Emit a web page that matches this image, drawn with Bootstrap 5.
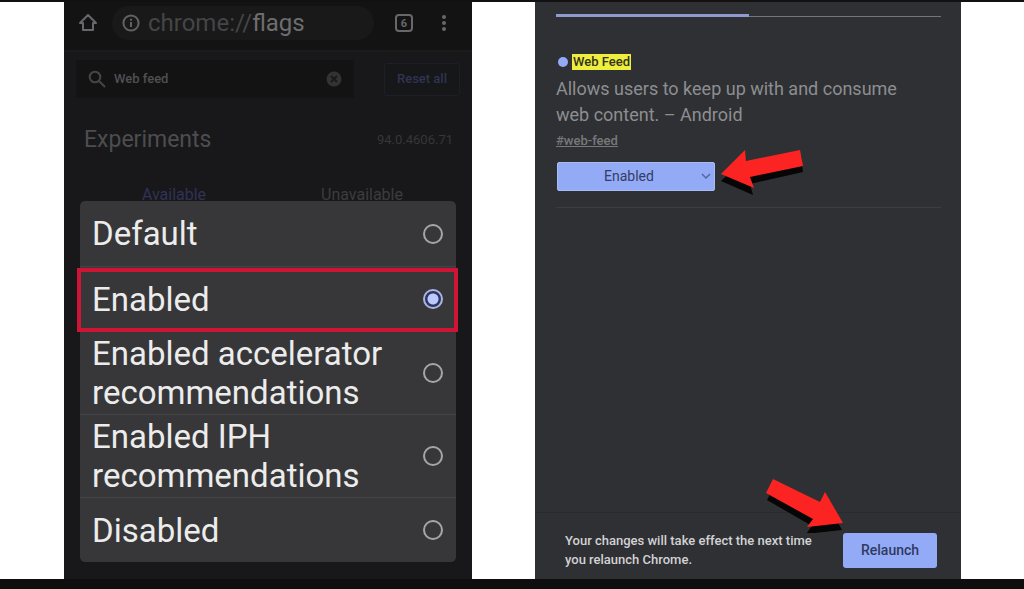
<!DOCTYPE html>
<html lang="en">
<head>
<meta charset="utf-8">
<meta name="viewport" content="width=device-width, initial-scale=1">
<title>Chrome flags: Web Feed</title>
<link rel="stylesheet" href="https://cdn.jsdelivr.net/npm/bootstrap@5.3.0/dist/css/bootstrap.min.css">
<style>
  body { font-family: Roboto, "Liberation Sans", sans-serif; background: #fff; border-top: 2px solid #111; border-bottom: 10px solid #0e0e0e; }
  .stage { display: grid; grid-template-columns: 64fr 408fr 63fr 426fr 63fr; }
  .phone-a { grid-column: 2; background: #18181a; color: #4d4d4f; }
  .phone-b { grid-column: 4; background: #2f3033; color: #8d8e91; }
  .toolbar { height: 50px; background: #131313; border-bottom: 2px solid #1c1c1c; padding: 0 20px 6px 14px; color: #68686a; }
  .omnibox { background: #191919; border: 0; border-radius: 18px; height: 34px; font-size: 24px; line-height: 34px; color: #454547; padding: 0 10px; margin: 0 20px 0 14px; }
  .omnibox b { font-weight: 400; color: #6d6d70; }
  .plain-btn { background: none; border: 0; padding: 0; color: inherit; line-height: 0; }
  .menu-btn { margin-left: 22px; }
  .search-row { padding: 8px 12px 0; gap: 30px; }
  .search-box { background: #131314; height: 38px; padding: 0 12px 0 12px; gap: 8px; color: #464648; }
  .search-box input { background: none; border: 0; outline: 0; min-width: 0; padding: 0; font-size: 13px; font-weight: 500; color: #505052; }
  .reset-btn { width: 76px; height: 33px; padding: 0; border: 1px solid #1d1e26; border-radius: 3px; background: #161719; color: #2f3452; font-size: 13px; font-weight: 500; }
  .heading-row { padding: 26px 19px 0 20px; }
  .heading-row h1 { font-size: 23px; line-height: 32px; font-weight: 400; margin: 0; }
  .version { font-size: 13px; color: #363638; }
  .tab-row { padding-top: 29px; font-size: 16px; line-height: 20px; font-weight: 400; }
  .tab-row a { flex: 1; text-align: center; text-decoration: none; color: #3c3c3e; }
  .tab-row a.current { color: #2f3355; }
  .picker { position: absolute; left: 16px; right: 16px; bottom: 17px; background: #373739; border-radius: 5px; color: #ececec; }
  .option { min-height: 65px; padding: 0 13px 0 12px; font-size: 33px; line-height: 39px; cursor: pointer; }
  .option.tall { min-height: 83px; }
  .option + .option { border-top: 1px solid #444447; }
  .option span { max-width: 310px; }
  .option input { appearance: none; flex: none; width: 20px; height: 20px; margin: 0; border: 2px solid #a6a6a8; border-radius: 50%; }
  .option input:checked { border-color: #a9b5de; background: radial-gradient(circle, #bcc8fa 5px, #2b3463 6px); }
  .option.marked { position: relative; }
  .option.marked::after { content: ""; position: absolute; inset: 1px -2px -1px -3px; border: 4px solid #d01436; }
  .flag { padding: 12px 20px 0 21px; }
  .tabline { height: 3px; border-bottom: 1px solid #74757b; }
  .tabline div { width: 50%; height: 3px; background: #8d9bd0; }
  .flag-name { margin-top: 37px; gap: 4px; font-size: 13px; line-height: 16px; font-weight: 500; }
  .flag-name i { width: 10px; height: 10px; border-radius: 50%; background: #94aaf6; margin-left: 2px; }
  .flag-name mark { background: #eeee3f; color: #33331b; padding: 0 1px; }
  .flag-text { font-size: 18px; line-height: 26px; margin: 6px 0 4px; max-width: 350px; }
  .flag-link { font-size: 13px; line-height: 18px; font-weight: 500; color: #77787b; display: block; }
  .flag-link:hover { color: #aaa; }
  .state { position: relative; width: 158px; margin: 12px 0 0 1px; }
  .state select { appearance: none; display: block; width: 100%; height: 29px; border: 1px solid #a9bbf5; border-radius: 2px; background: #93abf7; color: #343d63; font-size: 14px; padding: 0 14px 0 0; text-align: center; text-align-last: center; }
  .state .chev { position: absolute; right: 4px; top: 10px; pointer-events: none; }
  .rule { height: 1px; background: #3c3d40; margin-top: 16px; }
  .restart { border-top: 1px solid #292a2c; padding: 18px 24px 10px 30px; color: #d2d2d4; font-size: 13px; line-height: 19px; font-weight: 500; }
  .restart p { max-width: 260px; }
  .relaunch { width: 94px; height: 35px; border: 0; border-radius: 3px; background: #93abf7; color: #303a60; font-size: 14px; font-weight: 500; }
  .arrow-l { position: absolute; left: 162px; top: -14px; }
  .arrow-d { position: absolute; right: 92px; bottom: 35px; }
</style>
</head>
<body class="d-flex flex-column min-vh-100">
<main class="stage flex-grow-1">
  <section class="phone-a position-relative">
    <header class="toolbar d-flex align-items-center">
      <button class="plain-btn" aria-label="Home"><svg width="20" height="20" viewBox="0 0 20 20" fill="none" stroke="currentColor" stroke-width="2"><path d="M5 17V10H2L10 2l8 8h-3v7z" stroke-linejoin="round"/></svg></button>
      <button class="omnibox d-flex align-items-center flex-grow-1">
        <svg class="me-2" width="18" height="18" viewBox="0 0 18 18" fill="none" stroke="#626264" stroke-width="2"><circle cx="9" cy="9" r="7.6"/><path d="M9 8v5M9 4.7v2"/></svg>
        <span>chrome://<b>flags</b></span>
      </button>
      <button class="plain-btn" aria-label="Tabs"><svg width="20" height="20" viewBox="0 0 20 20"><rect x="2" y="2" width="16" height="16" rx="3" fill="none" stroke="currentColor" stroke-width="2"/><text x="10" y="14" text-anchor="middle" font-size="11" font-weight="700" fill="currentColor">6</text></svg></button>
      <button class="plain-btn menu-btn" aria-label="Menu"><svg width="16" height="18" viewBox="0 0 16 18" fill="currentColor"><circle cx="8" cy="3" r="2"/><circle cx="8" cy="9" r="2"/><circle cx="8" cy="15" r="2"/></svg></button>
    </header>
    <div class="search-row d-flex align-items-center">
      <div class="search-box d-flex align-items-center flex-grow-1">
        <svg width="18" height="18" viewBox="0 0 18 18" fill="none" stroke="currentColor" stroke-width="2"><circle cx="7" cy="7" r="5.3"/><path d="M11 11l6 6"/></svg>
        <input class="flex-grow-1" type="text" value="Web feed" aria-label="Search flags">
        <button class="plain-btn" aria-label="Clear"><svg width="16" height="16" viewBox="0 0 16 16"><circle cx="8" cy="8" r="7.5" fill="#333335"/><path d="M5 5l6 6M11 5l-6 6" stroke="#1a1a1b" stroke-width="2"/></svg></button>
      </div>
      <button class="reset-btn">Reset all</button>
    </div>
    <div class="heading-row d-flex align-items-center justify-content-between">
      <h1>Experiments</h1><span class="version">94.0.4606.71</span>
    </div>
    <nav class="tab-row d-flex px-3"><a class="current" href="#available">Available</a><a href="#unavailable">Unavailable</a></nav>
    <div class="picker" role="dialog" aria-label="Web Feed state">
      <label class="option d-flex align-items-center justify-content-between"><span>Default</span><input type="radio" name="state"></label>
      <label class="option marked d-flex align-items-center justify-content-between"><span>Enabled</span><input type="radio" name="state" checked></label>
      <label class="option tall d-flex align-items-center justify-content-between"><span>Enabled accelerator recommendations</span><input type="radio" name="state"></label>
      <label class="option tall d-flex align-items-center justify-content-between"><span>Enabled IPH recommendations</span><input type="radio" name="state"></label>
      <label class="option d-flex align-items-center justify-content-between"><span>Disabled</span><input type="radio" name="state"></label>
    </div>
  </section>

  <section class="phone-b d-flex flex-column">
    <div class="flag flex-grow-1">
      <div class="tabline"><div></div></div>
      <div class="flag-name d-flex align-items-center"><i></i><mark>Web Feed</mark></div>
      <p class="flag-text">Allows users to keep up with and consume web content. – Android</p>
      <a class="flag-link" href="#web-feed">#web-feed</a>
      <div class="state">
        <select aria-label="Web Feed"><option>Default</option><option selected>Enabled</option><option>Disabled</option></select>
        <svg class="chev" width="10" height="9" viewBox="0 0 10 9" fill="none" stroke="#5265a5" stroke-width="1.5"><path d="M1 2l4 4 4-4"/></svg>
        <svg class="arrow-l" width="88" height="48" viewBox="719 148 88 48"><path d="M721 181L746 158 747 168 801 156 803 172 750 184 753 195z" fill="#060606"/><path d="M721 174L745 150 746 161 800 150 803 166 750 177 754 188z" fill="#fb2422"/></svg>
      </div>
      <div class="rule"></div>
    </div>
    <footer class="restart d-flex justify-content-between align-items-center">
      <p class="mb-0">Your changes will take effect the next time you relaunch Chrome.</p>
      <div class="position-relative">
        <button class="relaunch">Relaunch</button>
        <svg class="arrow-d" width="80" height="56" viewBox="764 476 80 56"><path d="M773 486L766 499 811 525 805 533 841 529 825 500 819 508z" fill="#060606"/><path d="M772 478L765 492 812 518 806 526 842 522 824 491 819 501z" fill="#fb2422"/></svg>
      </div>
    </footer>
  </section>
</main>
<script src="https://cdn.jsdelivr.net/npm/bootstrap@5.3.0/dist/js/bootstrap.bundle.min.js"></script>
</body>
</html>
